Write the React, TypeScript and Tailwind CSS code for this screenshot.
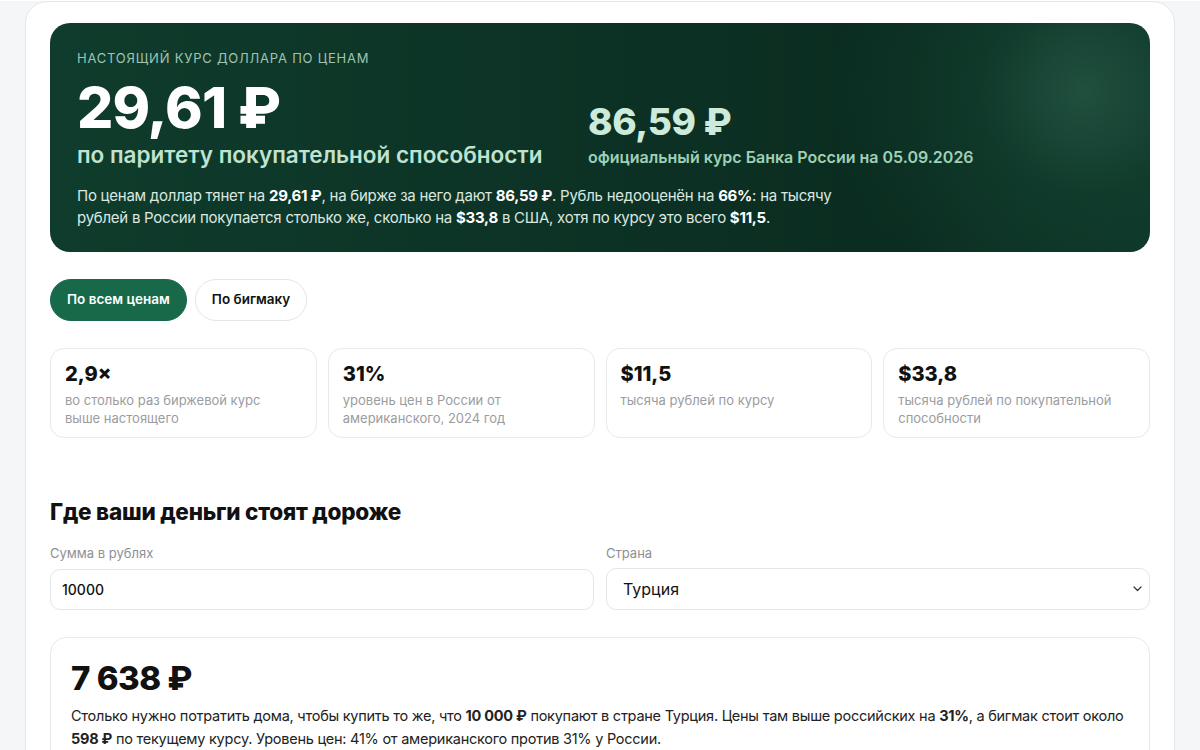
import { useState } from 'react'

const stats = [
  { value: '2,9×', label: 'во столько раз биржевой курс выше настоящего' },
  { value: '31%', label: 'уровень цен в России от американского, 2024 год' },
  { value: '$11,5', label: 'тысяча рублей по курсу' },
  { value: '$33,8', label: 'тысяча рублей по покупательной способности' },
]

export default function App() {
  const [tab, setTab] = useState<'all' | 'bigmac'>('all')
  const [amount, setAmount] = useState('10000')
  const [country, setCountry] = useState('Турция')

  return (
    <div className="min-h-screen bg-[#f5f6f8] font-['Inter','Noto_Sans',sans-serif] text-[#111]">
      <div className="mx-auto mt-px w-[1150px] rounded-t-[22px] border border-[#e6e7ea] bg-white px-6 pt-[21px] pb-10">
        {/* Hero */}
        <div className="rounded-[20px] bg-[radial-gradient(circle_at_94%_30%,#21503f_0%,rgba(20,70,52,0.45)_10%,transparent_24%),linear-gradient(90deg,#0f3c2c_0%,#0c3124_55%,#0b2c20_78%,#0d3426_100%)] px-[27px] pt-[26px] pb-[23px]">
          <div className="text-[13px] tracking-[0.06em] text-[#9fc4b3]">НАСТОЯЩИЙ КУРС ДОЛЛАРА ПО ЦЕНАМ</div>
          <div className="mt-[10px] flex items-end">
            <div className="w-[511px]">
              <div className="text-[57px] leading-[58px] font-extrabold tracking-[-0.015em] text-white">29,61 ₽</div>
              <div className="mt-[4px] text-[22.5px] leading-[28px] font-semibold text-[#bfe3d0]">по паритету покупательной способности</div>
            </div>
            <div className="pb-[1px]">
              <div className="text-[37px] leading-[42px] font-extrabold tracking-[-0.01em] text-[#cdeadb]">86,59 ₽</div>
              <div className="mt-[3px] text-[16px] leading-[22px] font-semibold text-[#9fcfb6]">официальный курс Банка России на 05.09.2026</div>
            </div>
          </div>
          <p className="mt-[16px] text-[15px] leading-[22px] tracking-[-0.25px] text-[#dbe8e1]">
            По ценам доллар тянет на <b className="font-bold text-white">29,61 ₽</b>, на бирже за него дают{' '}
            <b className="font-bold text-white">86,59 ₽</b>. Рубль недооценён на <b className="font-bold text-white">66%</b>: на тысячу
            <br />
            рублей в России покупается столько же, сколько на <b className="font-bold text-white">$33,8</b> в США, хотя по курсу это всего{' '}
            <b className="font-bold text-white">$11,5</b>.
          </p>
        </div>

        {/* Tabs */}
        <div className="mt-[27px] flex gap-2">
          <button
            onClick={() => setTab('all')}
            className={
              tab === 'all'
                ? 'h-[42px] rounded-full border border-[#17694a] bg-[#17694a] px-[16px] text-[13.5px] font-semibold text-white'
                : 'h-[42px] rounded-full border border-[#e4e5e8] bg-white px-[16px] text-[13.5px] font-semibold text-[#111]'
            }
          >
            По всем ценам
          </button>
          <button
            onClick={() => setTab('bigmac')}
            className={
              tab === 'bigmac'
                ? 'h-[42px] rounded-full border border-[#17694a] bg-[#17694a] px-[16px] text-[13.5px] font-semibold text-white'
                : 'h-[42px] rounded-full border border-[#e4e5e8] bg-white px-[16px] text-[13.5px] font-semibold text-[#111]'
            }
          >
            По бигмаку
          </button>
        </div>

        {/* Stats */}
        <div className="mt-[27px] grid grid-cols-4 gap-[11px]">
          {stats.map((s) => (
            <div key={s.value} className="h-[90px] rounded-[14px] border border-[#e8e9ec] px-[14px] pt-[12px]">
              <div className="text-[20px] leading-[26px] font-extrabold">{s.value}</div>
              <div className="mt-[4px] max-w-[218px] text-[13px] leading-[18px] text-[#9a9ca1]">{s.label}</div>
            </div>
          ))}
        </div>

        {/* Calculator */}
        <h2 className="mt-[60px] text-[22.5px] leading-[28px] font-extrabold tracking-[-0.01em]">Где ваши деньги стоят дороже</h2>
        <div className="mt-[18px] grid grid-cols-2 gap-3">
          <label className="block">
            <div className="text-[13px] leading-[18px] text-[#8e9095]">Сумма в рублях</div>
            <input
              value={amount}
              onChange={(e) => setAmount(e.target.value)}
              className="mt-[7px] h-[41px] w-full rounded-[10px] border border-[#e4e5e8] px-[11px] text-[14px] font-medium outline-none"
            />
          </label>
          <label className="block">
            <div className="text-[13px] leading-[18px] text-[#8e9095]">Страна</div>
            <div className="relative mt-[6px]">
              <select
                value={country}
                onChange={(e) => setCountry(e.target.value)}
                className="h-[42px] w-full appearance-none rounded-[10px] border border-[#e4e5e8] bg-white px-[16px] text-[16px] outline-none"
              >
                <option>Турция</option>
                <option>Казахстан</option>
                <option>Грузия</option>
              </select>
              <svg
                className="pointer-events-none absolute top-1/2 right-[8px] -translate-y-1/2"
                width="9"
                height="6"
                viewBox="0 0 9 6"
                fill="none"
              >
                <path d="M1 1l3.5 3.5L8 1" stroke="#333" strokeWidth="1.2" strokeLinecap="round" strokeLinejoin="round" />
              </svg>
            </div>
          </label>
        </div>

        {/* Result */}
        <div className="mt-[27px] rounded-[16px] border border-[#e8e9ec] px-5 pt-[20px] pb-5">
          <div className="text-[33px] leading-[40px] font-extrabold tracking-[-0.015em]">7 638 ₽</div>
          <p className="mt-[6px] text-[14.5px] leading-[23px] tracking-[-0.25px] text-[#222]">
            Столько нужно потратить дома, чтобы купить то же, что <b className="font-bold">10 000 ₽</b> покупают в стране Турция. Цены там выше российских на{' '}
            <b className="font-bold">31%</b>, а бигмак стоит около <b className="font-bold">598 ₽</b> по текущему курсу. Уровень цен: 41% от американского против 31% у России.
          </p>
        </div>
      </div>
    </div>
  )
}
